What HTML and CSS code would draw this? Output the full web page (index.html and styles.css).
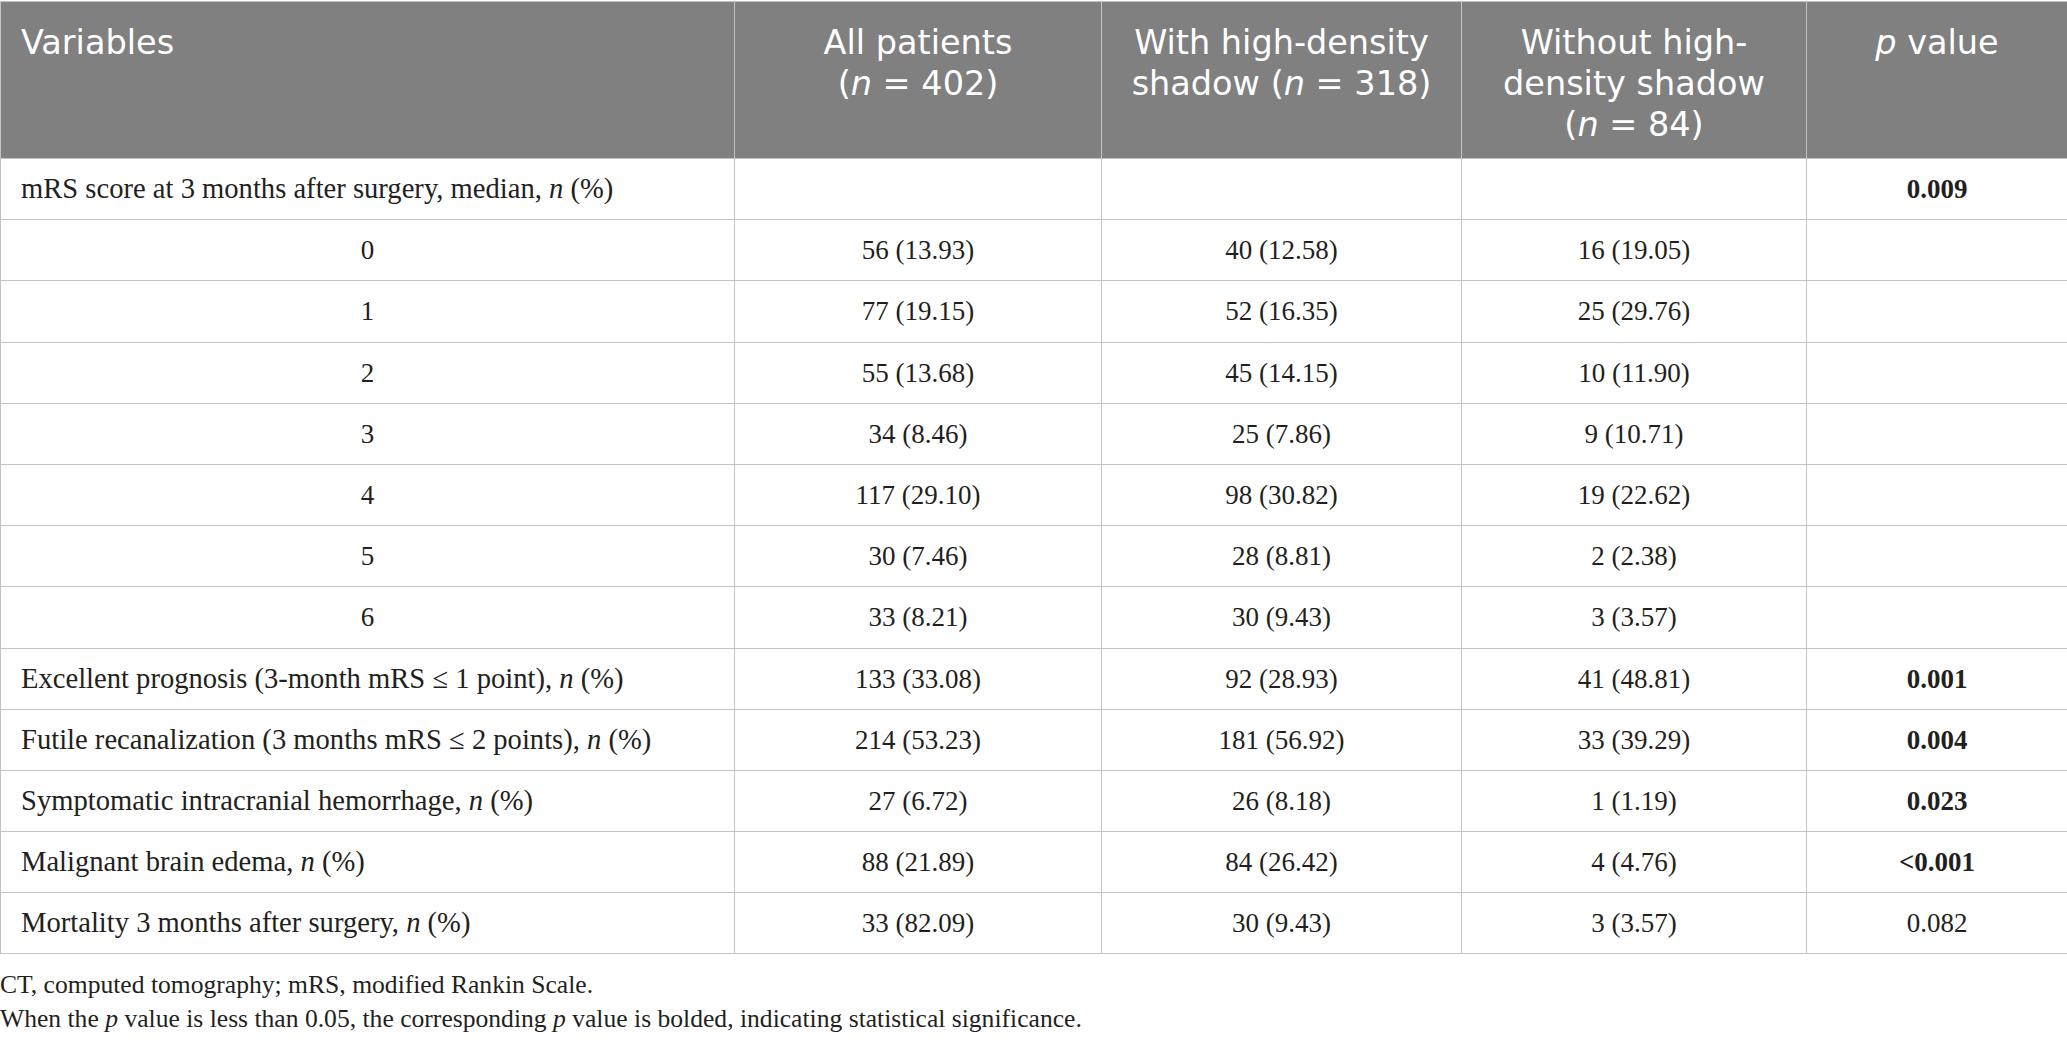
FILE: index.html
```html
<!DOCTYPE html>
<html lang="en">
<head>
<meta charset="utf-8">
<title>Table</title>
<link rel="stylesheet" href="styles.css">
</head>
<body>
<table class="data">
  <colgroup>
    <col class="c-var">
    <col class="c-all">
    <col class="c-with">
    <col class="c-without">
    <col class="c-p">
  </colgroup>
  <thead>
    <tr>
      <th class="left">Variables</th>
      <th>All patients<br>(<i>n</i> = 402)</th>
      <th>With high-density<br>shadow (<i>n</i> = 318)</th>
      <th>Without high-<br>density shadow<br>(<i>n</i> = 84)</th>
      <th><i>p</i> value</th>
    </tr>
  </thead>
  <tbody>
    <tr><td class="left">mRS score at 3 months after surgery, median, <i>n</i> (%)</td><td></td><td></td><td></td><td class="sig">0.009</td></tr>
    <tr><td>0</td><td>56 (13.93)</td><td>40 (12.58)</td><td>16 (19.05)</td><td></td></tr>
    <tr><td>1</td><td>77 (19.15)</td><td>52 (16.35)</td><td>25 (29.76)</td><td></td></tr>
    <tr><td>2</td><td>55 (13.68)</td><td>45 (14.15)</td><td>10 (11.90)</td><td></td></tr>
    <tr><td>3</td><td>34 (8.46)</td><td>25 (7.86)</td><td>9 (10.71)</td><td></td></tr>
    <tr><td>4</td><td>117 (29.10)</td><td>98 (30.82)</td><td>19 (22.62)</td><td></td></tr>
    <tr><td>5</td><td>30 (7.46)</td><td>28 (8.81)</td><td>2 (2.38)</td><td></td></tr>
    <tr><td>6</td><td>33 (8.21)</td><td>30 (9.43)</td><td>3 (3.57)</td><td></td></tr>
    <tr><td class="left">Excellent prognosis (3-month mRS ≤ 1 point), <i>n</i> (%)</td><td>133 (33.08)</td><td>92 (28.93)</td><td>41 (48.81)</td><td class="sig">0.001</td></tr>
    <tr><td class="left">Futile recanalization (3 months mRS ≤ 2 points), <i>n</i> (%)</td><td>214 (53.23)</td><td>181 (56.92)</td><td>33 (39.29)</td><td class="sig">0.004</td></tr>
    <tr><td class="left">Symptomatic intracranial hemorrhage, <i>n</i> (%)</td><td>27 (6.72)</td><td>26 (8.18)</td><td>1 (1.19)</td><td class="sig">0.023</td></tr>
    <tr><td class="left">Malignant brain edema, <i>n</i> (%)</td><td>88 (21.89)</td><td>84 (26.42)</td><td>4 (4.76)</td><td class="sig">&lt;0.001</td></tr>
    <tr><td class="left">Mortality 3 months after surgery, <i>n</i> (%)</td><td>33 (82.09)</td><td>30 (9.43)</td><td>3 (3.57)</td><td>0.082</td></tr>
  </tbody>
</table>
<div class="notes">
  <p>CT, computed tomography; mRS, modified Rankin Scale.</p>
  <p>When the <i>p</i> value is less than 0.05, the corresponding <i>p</i> value is bolded, indicating statistical significance.</p>
</div>
</body>
</html>
```

FILE: styles.css
```css
html, body {
  margin: 0;
  padding: 0;
  background: #ffffff;
}

body {
  padding-top: 1px;
}

.data {
  border-collapse: collapse;
  width: 2067px;
  table-layout: fixed;
  font-family: "Liberation Serif", "Times New Roman", serif;
  color: #231f20;
}

.c-var { width: 734px; }
.c-all { width: 367px; }
.c-with { width: 360px; }
.c-without { width: 345px; }
.c-p { width: 261px; }

.data th,
.data td {
  border: 1px solid #c3c3c3;
}

.data th {
  background: #808080;
  color: #ffffff;
  font-family: "DejaVu Sans", "Open Sans", sans-serif;
  font-weight: 400;
  font-size: 33.5px;
  line-height: 41px;
  text-align: center;
  vertical-align: top;
  padding: 20px 12px 0;
  height: 136px;
}

.data th i {
  font-style: italic;
}

.data th.left {
  text-align: left;
  padding-left: 20px;
}

.data td {
  font-size: 27px;
  line-height: 30px;
  text-align: center;
  vertical-align: middle;
  padding: 0 20px;
  height: 60.2px;
}

.data td.left {
  text-align: left;
  font-size: 28.6px;
}

.data td.sig {
  font-weight: 700;
}

.notes {
  font-family: "Liberation Serif", "Times New Roman", serif;
  color: #231f20;
  font-size: 25.6px;
  line-height: 34px;
  padding-top: 14px;
}

.notes p {
  margin: 0;
}
```
